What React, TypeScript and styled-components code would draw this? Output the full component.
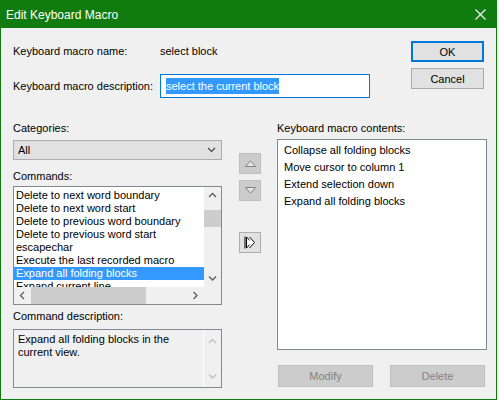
import styled, { createGlobalStyle } from "styled-components";

const GlobalStyle = createGlobalStyle`
  html, body {
    margin: 0;
    padding: 0;
    background: #ffffff;
  }
  body {
    font-family: "Liberation Sans", Arial, sans-serif;
    font-size: 11px;
    color: #000000;
  }
  * {
    box-sizing: border-box;
  }
`;

const Window = styled.div`
  width: 497px;
  height: 400px;
  border: 1px solid #107c10;
  background: #f0f0f0;
  display: flex;
  flex-direction: column;
  box-shadow: 0 2px 6px rgba(0, 0, 0, 0.18);
`;

const TitleBar = styled.div`
  height: 27px;
  flex-shrink: 0;
  background: #107c10;
  color: #ffffff;
  display: flex;
  align-items: center;
  justify-content: space-between;
  padding: 0 10px 0 5px;
`;

const Title = styled.span`
  font-size: 12px;
  line-height: 16px;
`;

const Body = styled.div`
  flex: 1;
  padding: 0 9px 0 12px;
  display: flex;
  flex-direction: column;
`;

const TopRow = styled.div`
  display: flex;
  justify-content: space-between;
  padding-right: 3px;
  height: 70px;
`;

const Fields = styled.div`
  display: flex;
  flex-direction: column;
  gap: 16px;
  padding-top: 15px;
`;

const FieldRow = styled.div<{ $h: number }>`
  display: flex;
  align-items: center;
  height: ${(p) => p.$h}px;
  white-space: nowrap;
`;

const FieldLabel = styled.span`
  width: 147px;
  flex-shrink: 0;
`;

const TextInput = styled.div`
  width: 210px;
  height: 24px;
  flex-shrink: 0;
  border: 1px solid #0078d7;
  background: #ffffff;
  display: flex;
  align-items: center;
  padding-left: 5px;
`;

const Selected = styled.span`
  background: #3399ff;
  color: #ffffff;
  line-height: 16px;
`;

const DialogButtons = styled.div`
  display: flex;
  flex-direction: column;
  gap: 6px;
  padding-top: 13px;
`;

const Button = styled.button<{ $default?: boolean; $w?: number; $h?: number }>`
  width: ${(p) => p.$w ?? 73}px;
  height: ${(p) => p.$h ?? 21}px;
  background: #e1e1e1;
  border: ${(p) => (p.$default ? "2px solid #0078d7" : "1px solid #adadad")};
  font-family: inherit;
  font-size: 11px;
  color: #000000;
  padding: 0;
  display: flex;
  align-items: center;
  justify-content: center;

  &:disabled {
    background: #cccccc;
    border: 1px solid #bfbfbf;
    color: #838383;
  }
`;

const Main = styled.div`
  display: flex;
  margin-top: 22px;
`;

const Column = styled.div<{ $w: number; $ml?: number }>`
  width: ${(p) => p.$w}px;
  margin-left: ${(p) => p.$ml ?? 0}px;
  flex-shrink: 0;
  display: flex;
  flex-direction: column;
`;

const Label = styled.div<{ $mt?: number }>`
  height: 16px;
  line-height: 16px;
  margin-top: ${(p) => p.$mt ?? 0}px;
  white-space: nowrap;
`;

const Select = styled.div`
  margin-top: 4px;
  height: 20px;
  background: #e1e1e1;
  border: 1px solid #adadad;
  display: flex;
  align-items: center;
  justify-content: space-between;
  padding: 0 5px 0 4px;
`;

const ListBox = styled.div<{ $h: number; $mt: number }>`
  height: ${(p) => p.$h}px;
  margin-top: ${(p) => p.$mt}px;
  border: 1px solid #828790;
  background: #ffffff;
  display: grid;
  grid-template-columns: 1fr 17px;
  grid-template-rows: 1fr 17px;
  overflow: hidden;
`;

const Items = styled.div`
  overflow: hidden;
  padding: 2px 0 0 0;
`;

const Item = styled.div<{ $sel?: boolean }>`
  height: 13px;
  line-height: 13px;
  padding-left: 2px;
  white-space: nowrap;
  background: ${(p) => (p.$sel ? "#3399ff" : "transparent")};
  color: ${(p) => (p.$sel ? "#ffffff" : "#000000")};
`;

const VScroll = styled.div`
  background: #f0f0f0;
  display: flex;
  flex-direction: column;
`;

const ScrollArrow = styled.div`
  width: 17px;
  height: 17px;
  flex-shrink: 0;
  display: flex;
  align-items: center;
  justify-content: center;
`;

const VTrack = styled.div`
  flex: 1;
  padding-top: 6px;
`;

const VThumb = styled.div`
  width: 17px;
  height: 17px;
  background: #cdcdcd;
`;

const HScroll = styled.div`
  background: #f0f0f0;
  display: flex;
`;

const HTrack = styled.div`
  flex: 1;
  display: flex;
  align-items: stretch;
`;

const HThumb = styled.div`
  width: 115px;
  background: #cdcdcd;
`;

const Corner = styled.div`
  background: #f0f0f0;
`;

const DescBox = styled.div`
  margin-top: 5px;
  height: 59px;
  border: 1px solid #828790;
  background: #f0f0f0;
  display: flex;
`;

const DescText = styled.div`
  flex: 1;
  padding: 3px 4px 0 4px;
  line-height: 13px;
`;

const DescScroll = styled.div`
  width: 18px;
  border-left: 1px solid #ffffff;
  display: flex;
  flex-direction: column;
  justify-content: space-between;
  padding: 3px 0 2px;
`;

const ContentsList = styled.div`
  margin-top: 3px;
  height: 211px;
  border: 1px solid #828790;
  background: #ffffff;
  padding: 2px 0 0 6px;
`;

const ContentsItem = styled.div`
  height: 17px;
  line-height: 17px;
  white-space: nowrap;
`;

const BottomButtons = styled.div`
  margin-top: 15px;
  display: flex;
  justify-content: space-between;
  padding: 0 2px 0 1px;
`;

const MoveButton = styled.button<{ $mt: number; $enabled?: boolean }>`
  width: 22px;
  height: 21px;
  margin-top: ${(p) => p.$mt}px;
  padding: 0;
  background: ${(p) => (p.$enabled ? "#e1e1e1" : "#cccccc")};
  border: 1px solid ${(p) => (p.$enabled ? "#adadad" : "#bfbfbf")};
  display: flex;
  align-items: center;
  justify-content: center;
`;

const Chevron = ({ dir, color }: { dir: "up" | "down" | "left" | "right"; color: string }) => {
  const paths = {
    up: "M1 5 L4.5 1.5 L8 5",
    down: "M1 1.5 L4.5 5 L8 1.5",
    left: "M5 1 L1.5 4.5 L5 8",
    right: "M1.5 1 L5 4.5 L1.5 8",
  };
  const vertical = dir === "up" || dir === "down";
  return (
    <svg width={vertical ? 9 : 7} height={vertical ? 7 : 9} viewBox={vertical ? "0 0 9 7" : "0 0 7 9"}>
      <path d={paths[dir]} fill="none" stroke={color} strokeWidth="1.4" />
    </svg>
  );
};

const commands = [
  "Delete to next word boundary",
  "Delete to next word start",
  "Delete to previous word boundary",
  "Delete to previous word start",
  "escapechar",
  "Execute the last recorded macro",
  "Expand all folding blocks",
  "Expand current line",
];

const contents = [
  "Collapse all folding blocks",
  "Move cursor to column 1",
  "Extend selection down",
  "Expand all folding blocks",
];

export default function App() {
  return (
    <>
      <GlobalStyle />
      <Window>
        <TitleBar>
          <Title>Edit Keyboard Macro</Title>
          <svg width="11" height="11" viewBox="0 0 11 11">
            <path d="M0.5 0.5 L10.5 10.5 M10.5 0.5 L0.5 10.5" stroke="#ffffff" strokeWidth="1.1" />
          </svg>
        </TitleBar>
        <Body>
          <TopRow>
            <Fields>
              <FieldRow $h={16}>
                <FieldLabel>Keyboard macro name:</FieldLabel>
                <span>select block</span>
              </FieldRow>
              <FieldRow $h={24}>
                <FieldLabel>Keyboard macro description:</FieldLabel>
                <TextInput>
                  <Selected>select the current block</Selected>
                </TextInput>
              </FieldRow>
            </Fields>
            <DialogButtons>
              <Button $default>OK</Button>
              <Button>Cancel</Button>
            </DialogButtons>
          </TopRow>

          <Main>
            <Column $w={209}>
              <Label>Categories:</Label>
              <Select>
                <span>All</span>
                <svg width="9" height="6" viewBox="0 0 9 6">
                  <path d="M1 1 L4.5 4.5 L8 1" fill="none" stroke="#404040" strokeWidth="1.1" />
                </svg>
              </Select>
              <Label $mt={8}>Commands:</Label>
              <ListBox $h={119} $mt={2}>
                <Items>
                  {commands.map((c, i) => (
                    <Item key={c} $sel={i === 6}>
                      {c}
                    </Item>
                  ))}
                </Items>
                <VScroll>
                  <ScrollArrow>
                    <Chevron dir="up" color="#606060" />
                  </ScrollArrow>
                  <VTrack>
                    <VThumb />
                  </VTrack>
                  <ScrollArrow>
                    <Chevron dir="down" color="#606060" />
                  </ScrollArrow>
                </VScroll>
                <HScroll>
                  <ScrollArrow>
                    <Chevron dir="left" color="#606060" />
                  </ScrollArrow>
                  <HTrack>
                    <HThumb />
                  </HTrack>
                  <ScrollArrow>
                    <Chevron dir="right" color="#606060" />
                  </ScrollArrow>
                </HScroll>
                <Corner />
              </ListBox>
              <Label $mt={3}>Command description:</Label>
              <DescBox>
                <DescText>
                  Expand all folding blocks in the
                  <br />
                  current view.
                </DescText>
                <DescScroll>
                  <ScrollArrow>
                    <Chevron dir="up" color="#c0c0c0" />
                  </ScrollArrow>
                  <ScrollArrow>
                    <Chevron dir="down" color="#c0c0c0" />
                  </ScrollArrow>
                </DescScroll>
              </DescBox>
            </Column>

            <Column $w={22} $ml={17}>
              <MoveButton $mt={33}>
                <svg width="11" height="7" viewBox="0 0 11 7">
                  <path d="M0.5 6.5 L5.5 0.8 L10.5 6.5 Z" fill="#e4e4e4" stroke="#838383" strokeWidth="1" />
                </svg>
              </MoveButton>
              <MoveButton $mt={6}>
                <svg width="11" height="7" viewBox="0 0 11 7">
                  <path d="M0.5 0.5 L10.5 0.5 L5.5 6.2 Z" fill="#e4e4e4" stroke="#838383" strokeWidth="1" />
                </svg>
              </MoveButton>
              <MoveButton $mt={31} $enabled>
                <svg width="12" height="13" viewBox="0 0 12 13">
                  <path d="M1 0.5 V12.5" stroke="#000000" strokeWidth="1" />
                  <path d="M2.5 1 L7.5 6.5 L2.5 12 Z" fill="#ffffff" stroke="#000000" strokeWidth="1" />
                  <path d="M5.5 1 L10.5 6.5 L5.5 12" fill="#ffffff" stroke="#000000" strokeWidth="1" />
                </svg>
              </MoveButton>
            </Column>

            <Column $w={210} $ml={16}>
              <Label>Keyboard macro contents:</Label>
              <ContentsList>
                {contents.map((c) => (
                  <ContentsItem key={c}>{c}</ContentsItem>
                ))}
              </ContentsList>
              <BottomButtons>
                <Button $w={95} $h={22} disabled>
                  Modify
                </Button>
                <Button $w={95} $h={22} disabled>
                  Delete
                </Button>
              </BottomButtons>
            </Column>
          </Main>
        </Body>
      </Window>
    </>
  );
}
